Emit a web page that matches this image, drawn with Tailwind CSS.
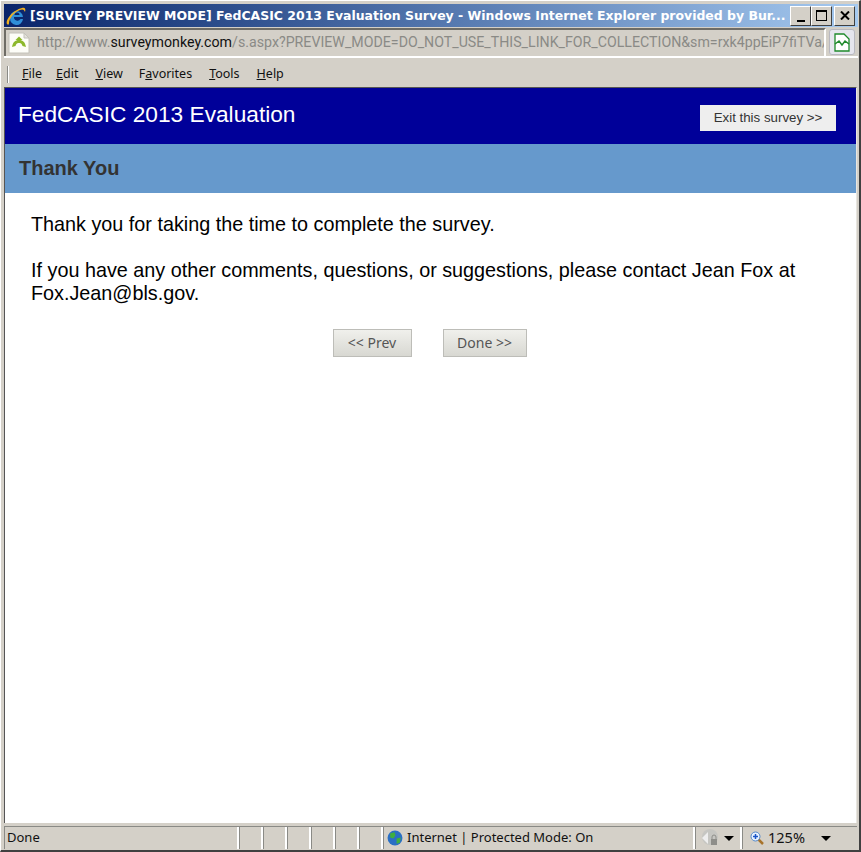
<!DOCTYPE html>
<html lang="en">
<head>
    <meta charset="UTF-8">
    <title>FedCASIC 2013 Evaluation Survey</title>
    <script src="https://cdn.jsdelivr.net/npm/@tailwindcss/browser@4"></script>
</head>
<body class="bg-[#d4d0c8]">
    <div class="w-[861px] h-[852px] flex flex-col overflow-hidden bg-[#d4d0c8] border-t border-l border-white border-r-2 border-r-[#404040] border-b-2 border-b-[#404040] font-['Liberation_Sans',sans-serif]">
        <!-- Title bar -->
        <div class="mt-[3px] ml-[3px] mr-[1px] h-[23px] shrink-0 flex items-center bg-gradient-to-r from-[#0a246a] to-[#a6caf0] pl-[1px] pr-[3px]">
            <svg class="w-[22px] h-[22px] shrink-0" viewBox="0 0 22 22">
                <path d="M5 13a6.500 6.500 0 1 1 13 -1h-9a3.500 3.500 0 0 0 6.500 2h2.500a6.500 6.500 0 0 1 -13 -1z" fill="#2f8fd8"/>
                <path d="M9.500 10h5a2.500 2.500 0 0 0 -5 0z" fill="#0a246a"/>
                <path d="M2 19c-2 -4 6 -14 15 -16c3 -1 4 1 3 4c-1 -3 -3 -3 -5 -2c-6 2 -11 9 -11 13c0 2 -1 2 -2 1z" fill="#f0b020"/>
            </svg>
            <span class="ml-[3px] pt-[1px] flex-1 whitespace-nowrap overflow-hidden font-['DejaVu_Sans',sans-serif] font-bold text-[12.470px] text-white">[SURVEY PREVIEW MODE] FedCASIC 2013 Evaluation Survey - Windows Internet Explorer provided by Bur...</span>
            <div class="flex items-center shrink-0">
                <div class="w-[21px] h-[20px] bg-[#d4d0c8] border border-t-white border-l-white border-r-[#404040] border-b-[#404040] flex items-end justify-center pb-[3px]"><div class="w-[8px] h-[2px] bg-black"></div></div>
                <div class="w-[21px] h-[20px] bg-[#d4d0c8] border border-t-white border-l-white border-r-[#404040] border-b-[#404040] flex items-center justify-center"><div class="w-[11px] h-[11px] border border-black border-t-2"></div></div>
                <div class="ml-[2px] w-[21px] h-[20px] bg-[#d4d0c8] border border-t-white border-l-white border-r-[#404040] border-b-[#404040] flex items-center justify-center">
                    <svg class="w-[10px] h-[9px]" viewBox="0 0 10 9"><path d="M1 0.500l8 8M9 0.500l-8 8" stroke="#000" stroke-width="2"/></svg>
                </div>
            </div>
        </div>
        <!-- Address row -->
        <div class="mt-[1px] ml-[3px] mr-[1px] h-[30px] shrink-0 flex border-b-2 border-white">
            <div class="w-[822px] h-[28px] flex items-center overflow-hidden border-t-2 border-l-2 border-t-[#6e6c66] border-l-[#6e6c66] border-r-2 border-r-white">
                <svg class="ml-[2px] w-[22px] h-[22px] shrink-0" viewBox="0 0 22 22">
                    <path d="M1 1h15l5 5v15h-20z" fill="#fdfdf8" stroke="#c4c2ba"/>
                    <path d="M16 1v5h5z" fill="#e4e2dc" stroke="#c4c2ba"/>
                    <path d="M4 15c1 -5 3 -7 7 -7s6 2 7 7l-3.500 -1c-1 -3 -2 -3 -3.500 -3s-2.500 0 -3.500 3z" fill="#8cb82b"/>
                    <path d="M7.500 8l3.500 -3.500l3.500 3.500z" fill="#8cb82b"/>
                </svg>
                <span class="ml-[7px] whitespace-nowrap font-['Roboto',sans-serif] text-[14.200px] text-[#8a8a86]">http://www.<span class="text-[#111]">surveymonkey.com</span>/s.aspx?PREVIEW_MODE=DO_NOT_USE_THIS_LINK_FOR_COLLECTION&amp;sm=rxk4ppEiP7fiTVa/</span>
            </div>
            <div class="ml-[3px] mt-[1px] w-[26px] h-[26px] shrink-0 rounded-[3px] border border-[#b8b8c0] bg-[#e6e6ee] flex items-center justify-center">
                <svg class="w-[16px] h-[19px]" viewBox="0 0 16 19">
                    <path d="M1 1h9l5 5v12h-14z" fill="#fff" stroke="#1f8a2c" stroke-width="1.300"/>
                    <path d="M1 11l4 -3l3 4l3 -4l4 3" fill="none" stroke="#1f8a2c" stroke-width="1.500"/>
                </svg>
            </div>
        </div>
        <!-- Menu row -->
        <div class="h-[29px] shrink-0 flex items-center pl-[6px] pt-[3px] font-['Noto_Sans',sans-serif] text-[12.500px] text-[#111]">
            <div class="w-[2px] h-[17px] border-l border-[#8a8a86] bg-white"></div>
            <div class="ml-[13px] flex">
                <span><u>F</u>ile</span>
                <span class="ml-[14px]"><u>E</u>dit</span>
                <span class="ml-[17px]"><u>V</u>iew</span>
                <span class="ml-[16px]">F<u>a</u>vorites</span>
                <span class="ml-[17px]"><u>T</u>ools</span>
                <span class="ml-[17px]"><u>H</u>elp</span>
            </div>
        </div>
        <!-- Page area -->
        <div class="ml-[3px] mr-[2px] h-[736px] shrink-0 flex flex-col overflow-hidden bg-white border-t border-l border-r border-[#555] border-r-[#e8e6e0]">
            <div class="h-[56px] shrink-0 flex items-center justify-between bg-[#000099] pl-[13px] pr-[20px]">
                <span class="mb-[3px] text-[22.700px] text-white">FedCASIC 2013 Evaluation</span>
                <span class="mt-[4px] w-[136px] h-[26px] flex items-center justify-center bg-[#eeeeee] text-[13.300px] text-[#333]">Exit this survey &gt;&gt;</span>
            </div>
            <div class="h-[49px] shrink-0 flex items-center bg-[#6699cc] pl-[14px] pb-[1px]">
                <span class="text-[20px] font-bold text-[#333]">Thank You</span>
            </div>
            <div class="pt-[20px] pl-[26px] pr-[40px] text-[19.800px] leading-[23px] text-black">
                <p>Thank you for taking the time to complete the survey.</p>
                <p class="mt-[23px]">If you have any other comments, questions, or suggestions, please contact Jean Fox at Fox.Jean@bls.gov.</p>
            </div>
            <div class="mt-[24px] flex justify-center gap-[31px] pr-[2px] font-['Noto_Sans',sans-serif] text-[14px] text-[#555]">
                <span class="w-[79px] h-[28px] pb-[2px] flex items-center justify-center border border-[#bdbdb8] bg-gradient-to-b from-[#f0f0ec] to-[#d8d8d2]">&lt;&lt; Prev</span>
                <span class="w-[84px] h-[28px] pb-[2px] flex items-center justify-center border border-[#bdbdb8] bg-gradient-to-b from-[#f0f0ec] to-[#d8d8d2]">Done &gt;&gt;</span>
            </div>
        </div>
        <!-- Status bar -->
        <div class="mt-[3px] ml-[3px] mr-[2px] h-[23px] shrink-0 flex font-['Noto_Sans',sans-serif] text-[13px] text-[#111] border-t border-[#8a8a86]">
            <div class="w-[235px] flex items-center pl-[2px] border-r-2 border-r-white border-l border-l-[#8a8a86]">Done</div>
            <div class="w-[24px] border-l border-[#8a8a86] border-r-2 border-r-white"></div>
            <div class="w-[24px] border-l border-[#8a8a86] border-r-2 border-r-white"></div>
            <div class="w-[24px] border-l border-[#8a8a86] border-r-2 border-r-white"></div>
            <div class="w-[24px] border-l border-[#8a8a86] border-r-2 border-r-white"></div>
            <div class="w-[24px] border-l border-[#8a8a86] border-r-2 border-r-white"></div>
            <div class="w-[24px] border-l border-[#8a8a86] border-r-2 border-r-white"></div>
            <div class="w-[312px] flex items-center pl-[3px] border-l border-[#8a8a86] border-r-2 border-r-white">
                <svg class="w-[16px] h-[16px] mr-[4px]" viewBox="0 0 15 15">
                    <circle cx="7.500" cy="7.500" r="7" fill="#2a6fc4"/>
                    <path d="M3 3l4 -1l1 3l-2 3l-3 -1zM9 8l4 -1l-1 5l-3 1z" fill="#3faf3f"/>
                </svg>
                <span class="whitespace-nowrap">Internet | Protected Mode: On</span>
            </div>
            <div class="w-[47px] flex items-center pl-[4px] border-l border-[#8a8a86] border-r-2 border-r-white">
                <svg class="w-[20px] h-[18px]" viewBox="0 0 20 18">
                    <circle cx="10" cy="8" r="8" fill="#c6c6c2"/>
                    <path d="M2 9l6 -6v12z" fill="#eee"/>
                    <path d="M12 10v-2a2 2 0 0 1 4 0v2" fill="none" stroke="#8e8e8a"/>
                    <rect x="11" y="10" width="6" height="6" fill="#8e8e8a"/>
                </svg>
                <span class="ml-[4px] w-0 h-0 border-x-[5px] border-x-transparent border-t-[5px] border-t-black"></span>
            </div>
            <div class="flex-1 flex items-center pl-[7px] border-l border-[#8a8a86]">
                <svg class="w-[14px] h-[14px]" viewBox="0 0 14 14">
                    <path d="M8 8l5 5" stroke="#a8742c" stroke-width="2.500"/>
                    <circle cx="5.500" cy="5.500" r="4.500" fill="#e8f2ff" stroke="#5588c8"/>
                    <path d="M3 5.500h5M5.500 3v5" stroke="#1a55c8" stroke-width="1.500"/>
                </svg>
                <span class="ml-[4px] text-[14.500px]">125%</span>
                <span class="ml-[16px] w-0 h-0 border-x-[5px] border-x-transparent border-t-[5px] border-t-black"></span>
            </div>
        </div>
    </div>
</body>
</html>
